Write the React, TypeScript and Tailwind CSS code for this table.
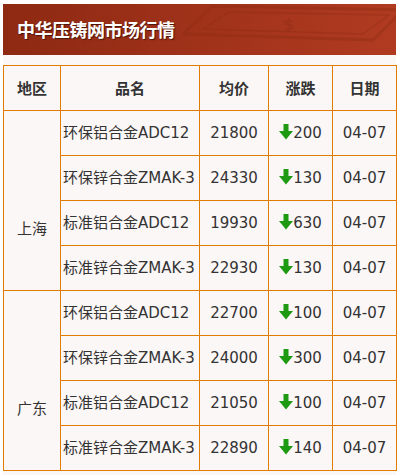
const rows = [
  { region: "上海", name: "环保铝合金ADC12", price: "21800", change: "200", date: "04-07" },
  { region: "上海", name: "环保锌合金ZMAK-3", price: "24330", change: "130", date: "04-07" },
  { region: "上海", name: "标准铝合金ADC12", price: "19930", change: "630", date: "04-07" },
  { region: "上海", name: "标准锌合金ZMAK-3", price: "22930", change: "130", date: "04-07" },
  { region: "广东", name: "环保铝合金ADC12", price: "22700", change: "100", date: "04-07" },
  { region: "广东", name: "环保锌合金ZMAK-3", price: "24000", change: "300", date: "04-07" },
  { region: "广东", name: "标准铝合金ADC12", price: "21050", change: "100", date: "04-07" },
  { region: "广东", name: "标准锌合金ZMAK-3", price: "22890", change: "140", date: "04-07" },
];

const DownArrow = () => (
  <svg width="14" height="16" viewBox="0 0 14 16" className="inline-block align-[-2px]">
    <rect x="4.5" y="0" width="5" height="8" fill="#1e9a12" />
    <polygon points="0,7 14,7 7,15.5" fill="#1e9a12" />
  </svg>
);

const cell = "border border-[#e07c00] h-[45px] p-0";

export default function App() {
  return (
    <div className="bg-white min-h-[475px] pt-[4px] pl-[3px]">
      <div
        className="w-[393px] bg-[#fbf7f6] pb-[5px]"
        style={{ fontFamily: '"DejaVu Sans", "Noto Sans CJK SC", sans-serif' }}
      >
        <div className="relative h-[51px] overflow-hidden bg-gradient-to-r from-[#8e2912] via-[#a0321a] to-[#b03b21] flex items-center pl-[14px]">
          <svg
            className="absolute left-[180px] top-[-4px]"
            width="220"
            height="60"
            viewBox="0 0 220 60"
          >
            <g fill="none" stroke="#8a2a12" strokeOpacity="0.35" strokeWidth="3">
              <polygon points="30,6 220,10 190,40 0,34" />
              <polygon points="46,12 206,15 180,34 20,29" strokeWidth="1.5" />
            </g>
            <text x="100" y="30" fontSize="16" fontWeight="bold" fill="#8a2a12" fillOpacity="0.35">$</text>
          </svg>
          <span
            className="relative text-white font-bold text-[18px] tracking-[-0.5px]"
            style={{ fontFamily: '"Noto Sans CJK SC", sans-serif', textShadow: "1px 1px 1px #4a1405" }}
          >
            中华压铸网市场行情
          </span>
        </div>
        <div className="h-[10px]" />
        <table className="w-[393px] border-collapse table-fixed text-[15px] text-[#333]">
          <colgroup>
            <col className="w-[57px]" />
            <col className="w-[139px]" />
            <col className="w-[69px]" />
            <col className="w-[64px]" />
            <col className="w-[64px]" />
          </colgroup>
          <thead>
            <tr className="font-bold" style={{ fontFamily: '"Noto Sans CJK SC", sans-serif' }}>
              <th className={cell}>地区</th>
              <th className={cell}>品名</th>
              <th className={cell}>均价</th>
              <th className={cell}>涨跌</th>
              <th className={cell}>日期</th>
            </tr>
          </thead>
          <tbody>
            {rows.map((r, i) => (
              <tr key={i}>
                {i % 4 === 0 && (
                  <td rowSpan={4} className={cell + " text-center pt-[58px]"}>
                    {r.region}
                  </td>
                )}
                <td className={cell + " pl-[2px] whitespace-nowrap overflow-hidden"}>{r.name}</td>
                <td className={cell + " text-center"}>{r.price}</td>
                <td className={cell + " text-center whitespace-nowrap"}>
                  <DownArrow />
                  {r.change}
                </td>
                <td className={cell + " text-center"}>{r.date}</td>
              </tr>
            ))}
          </tbody>
        </table>
      </div>
    </div>
  );
}
